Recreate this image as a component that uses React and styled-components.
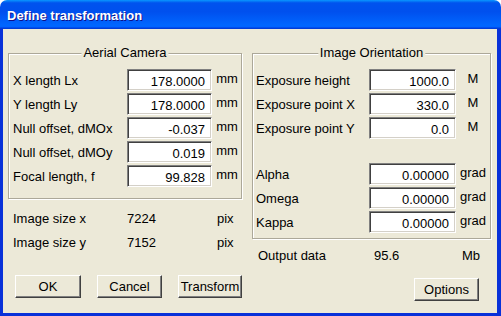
import React from "react";
import styled, { createGlobalStyle } from "styled-components";

const GlobalStyle = createGlobalStyle`
  body {
    margin: 0;
    background: #ffffff;
    font-family: "Liberation Sans", Arial, sans-serif;
  }
`;

const Window = styled.div`
  width: 501px;
  height: 316px;
  display: flex;
  flex-direction: column;
  box-sizing: border-box;
`;

const TitleBar = styled.div`
  height: 29px;
  flex-shrink: 0;
  display: flex;
  align-items: center;
  padding: 1px 0 0 7px;
  box-sizing: border-box;
  border-radius: 7px 7px 0 0;
  background: linear-gradient(
    180deg,
    #0997ff,
    #0053ee 10%,
    #0050ee 40%,
    #0066ff 86%,
    #0066ff 91%,
    #005bff 94%,
    #003dd7 96%,
    #003dd7
  );
`;

const Title = styled.span`
  color: #ffffff;
  font-weight: bold;
  font-size: 13px;
  text-shadow: 1px 1px #0f1089;
`;

const Body = styled.div`
  flex: 1;
  display: flex;
  gap: 10px;
  padding: 24px 6px 0 5px;
  background: #ece9d8;
  border: solid #0831d9;
  border-width: 0 4px 3px 3px;
  font-size: 13px;
  color: #000000;
`;

const Column = styled.div`
  width: ${(p) => p.width}px;
  display: flex;
  flex-direction: column;
`;

const Group = styled.div`
  position: relative;
  border: 1px solid #aca899;
  box-shadow: inset 1px 1px 0 #ffffff, 1px 1px 0 #ffffff;
  padding: 15px 0 ${(p) => p.bottom}px ${(p) => p.left}px;
  display: flex;
  flex-direction: column;
  gap: 2px;
`;

const GroupTitle = styled.span`
  position: absolute;
  top: -9px;
  left: 50%;
  transform: translateX(-50%);
  padding: 0 2px;
  line-height: 16px;
  background: #ece9d8;
  white-space: nowrap;
`;

const FieldRow = styled.div`
  display: grid;
  grid-template-columns: ${(p) => p.cols};
  column-gap: 2px;
  height: 22px;
  align-items: center;
`;

const Spacer = styled.div`
  height: ${(p) => p.h}px;
`;

const Label = styled.span`
  white-space: nowrap;
`;

const Input = styled.div`
  height: 22px;
  box-sizing: border-box;
  background: #ffffff;
  border: 1px solid;
  border-color: #808080 #ffffff #ffffff #808080;
  box-shadow: inset 1px 1px 0 #404040, inset -1px -1px 0 #d4d0c8;
  text-align: right;
  padding: 1px 6px 0 0;
  line-height: 21px;
`;

const Unit = styled.span`
  text-align: center;
  align-self: start;
  padding-top: 2px;
`;

const InfoList = styled.div`
  margin-top: ${(p) => p.top}px;
  padding-left: ${(p) => p.left}px;
`;

const InfoRow = styled.div`
  display: grid;
  grid-template-columns: ${(p) => p.cols};
  height: 24px;
  line-height: 22px;
`;

const ButtonRow = styled.div`
  display: flex;
  gap: 16px;
  margin-top: ${(p) => p.top}px;
  padding-left: 7px;
  justify-content: ${(p) => (p.end ? "flex-end" : "flex-start")};
  padding-right: ${(p) => (p.end ? 12 : 0)}px;
`;

const Button = styled.button`
  width: ${(p) => p.w}px;
  height: 23px;
  box-sizing: border-box;
  background: #ece9d8;
  font-family: "Liberation Sans", Arial, sans-serif;
  font-size: 13px;
  color: #000000;
  padding: 0;
  border: 1px solid;
  border-color: #ffffff #404040 #404040 #ffffff;
  box-shadow: inset -1px -1px 0 #808080;
`;

const cameraFields = [
  ["X length Lx", "178.0000"],
  ["Y length Ly", "178.0000"],
  ["Null offset, dMOx", "-0.037"],
  ["Null offset, dMOy", "0.019"],
  ["Focal length, f", "99.828"],
];

const exposureFields = [
  ["Exposure height", "1000.0"],
  ["Exposure point X", "330.0"],
  ["Exposure point Y", "0.0"],
];

const angleFields = [
  ["Alpha", "0.00000"],
  ["Omega", "0.00000"],
  ["Kappa", "0.00000"],
];

const LEFT_COLS = "112px 85px 26px";
const RIGHT_COLS = "111px 87px 30px";

export default function App() {
  return (
    <>
      <GlobalStyle />
      <Window>
        <TitleBar>
          <Title>Define transformation</Title>
        </TitleBar>
        <Body>
          <Column width={234}>
            <Group left={4} bottom={11}>
              <GroupTitle>Aerial Camera</GroupTitle>
              {cameraFields.map(([label, value]) => (
                <FieldRow key={label} cols={LEFT_COLS}>
                  <Label>{label}</Label>
                  <Input>{value}</Input>
                  <Unit>mm</Unit>
                </FieldRow>
              ))}
            </Group>
            <InfoList top={9} left={5}>
              <InfoRow cols="114px 90px auto">
                <span>Image size x</span>
                <span>7224</span>
                <span>pix</span>
              </InfoRow>
              <InfoRow cols="114px 90px auto">
                <span>Image size y</span>
                <span>7152</span>
                <span>pix</span>
              </InfoRow>
            </InfoList>
            <ButtonRow top={19}>
              <Button w={66}>OK</Button>
              <Button w={65}>Cancel</Button>
              <Button w={64}>Transform</Button>
            </ButtonRow>
          </Column>
          <Column width={239}>
            <Group left={3} bottom={5}>
              <GroupTitle>Image Orientation</GroupTitle>
              {exposureFields.map(([label, value]) => (
                <FieldRow key={label} cols={RIGHT_COLS}>
                  <Label>{label}</Label>
                  <Input>{value}</Input>
                  <Unit>M</Unit>
                </FieldRow>
              ))}
              <Spacer h={20} />
              {angleFields.map(([label, value]) => (
                <FieldRow key={label} cols={RIGHT_COLS}>
                  <Label>{label}</Label>
                  <Input>{value}</Input>
                  <Unit>grad</Unit>
                </FieldRow>
              ))}
            </Group>
            <InfoList top={6} left={6}>
              <InfoRow cols="116px 88px auto">
                <span>Output data</span>
                <span>95.6</span>
                <span>Mb</span>
              </InfoRow>
            </InfoList>
            <ButtonRow top={9} end>
              <Button w={65}>Options</Button>
            </ButtonRow>
          </Column>
        </Body>
      </Window>
    </>
  );
}
